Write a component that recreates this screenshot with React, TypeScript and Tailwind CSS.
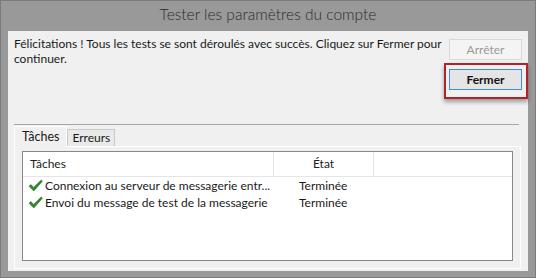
import React from "react";

function Check() {
  return (
    <svg width="15" height="13" viewBox="0 0 15 13" className="shrink-0">
      <path d="M1 7.2 L3 5.6 L5.6 8.4 L13.2 1 L14.4 2.2 L5.8 12 Z" fill="#2e8b2e" stroke="#1f6e1f" strokeWidth="0.6" strokeLinejoin="round" />
    </svg>
  );
}

export default function App() {
  const font = { fontFamily: "Lato, 'Liberation Sans', sans-serif" };
  return (
    <div className="w-[536px] h-[280px] bg-white" style={font}>
      <div className="h-[278px] bg-[#999999] border border-[#7c7c7c] flex flex-col px-[7px] pb-[6px]">
        <div className="h-[30px] pb-[3px] flex items-center justify-center text-[15.5px] text-[#2b2b2b] font-light">
          Tester les paramètres du compte
        </div>
        <div className="flex-1 bg-[#f0f0f0] flex flex-col text-[12px] text-[#1a1a1a]">
          <div className="flex h-[93px]">
            <div className="flex-1 pl-[6px] pt-[5px] leading-[15px] pr-[2px]">
              Félicitations ! Tous les tests se sont déroulés avec succès. Cliquez sur Fermer pour continuer.
            </div>
            <div className="w-[73px] mr-[6px] pt-[8px] flex flex-col gap-[9px]">
              <div className="h-[21px] border border-[#d9d9d9] bg-[#f4f4f4] text-[#9a9a9a] flex items-center justify-center">
                Arrêter
              </div>
              <div className="relative">
                <div className="h-[21px] border border-[#3d8ee0] bg-[#e5e5e5] text-[#111] font-bold flex items-center justify-center">
                  Fermer
                </div>
                <div className="absolute left-[-5px] right-[-6px] top-[-6px] bottom-[-9px] border-2 border-[#b0232b] shadow-[0_3px_4px_rgba(0,0,0,0.35)]" />
              </div>
            </div>
          </div>
          <div className="h-px bg-[#a5a5a5] ml-[6px] mr-[9px]" />
          <div className="flex ml-[6px] h-[21px] items-end">
            <div className="px-[7px] bg-[#f0f0f0] border-l border-t border-r border-white flex items-center relative z-10 mb-[-1px] h-[21px] text-[12.5px]">
              Tâches
            </div>
            <div className="h-[17px] px-[4px] bg-[#e9e9e9] border border-[#c9c9c9] border-b-0 flex items-center">
              Erreurs
            </div>
          </div>
          <div className="flex-1 ml-[6px] mr-[7px] mb-[2px] border border-white px-[7px] pt-[4px] pb-[7px] flex">
            <div className="flex-1 bg-white border border-[#828790] flex flex-col">
              <div className="flex h-[25px] border-b border-[#e5e5e5] text-[#222]">
                <div className="w-[251px] border-r border-[#e5e5e5] pl-[7px] flex items-center">Tâches</div>
                <div className="w-[100px] border-r border-[#e5e5e5] flex items-center justify-center">État</div>
              </div>
              <div className="flex flex-col">
                <div className="flex h-[17px] items-center">
                  <div className="w-[251px] pl-[5px] flex items-center gap-[2px]">
                    <Check />
                    <span className="whitespace-nowrap">Connexion au serveur de messagerie entr...</span>
                  </div>
                  <div className="pl-[25px]">Terminée</div>
                </div>
                <div className="flex h-[17px] items-center">
                  <div className="w-[251px] pl-[5px] flex items-center gap-[2px]">
                    <Check />
                    <span className="whitespace-nowrap">Envoi du message de test de la messagerie</span>
                  </div>
                  <div className="pl-[25px]">Terminée</div>
                </div>
              </div>
            </div>
          </div>
        </div>
      </div>
    </div>
  );
}
